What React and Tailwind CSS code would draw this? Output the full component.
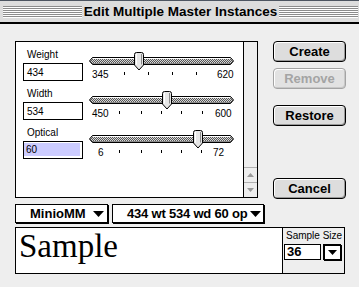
import React from "react";

const SYS = "font-['Liberation_Sans',Arial,sans-serif] font-bold text-[13px]";
const SMALL = "font-['Liberation_Sans',Arial,sans-serif] text-[10px]";

function Stripes() {
  return (
    <div className="flex-1 flex flex-col">
      {[0, 1, 2, 3, 4, 5].map((i) => (
        <div key={i} className="flex flex-col">
          <div className="h-px bg-[#8c8c8c]" />
          <div className="h-px bg-white" />
        </div>
      ))}
    </div>
  );
}

function Track({ id, cx }) {
  return (
    <svg width="145" height="19" className="block">
      <defs>
        <pattern id={id} width="2" height="2" patternUnits="userSpaceOnUse">
          <rect width="2" height="2" fill="#d8d8d8" />
          <rect width="1" height="1" fill="#555" />
          <rect x="1" y="1" width="1" height="1" fill="#555" />
        </pattern>
      </defs>
      <path
        d="M0.5 9 L3.5 5.5 L141.5 5.5 L144.5 9 L141.5 12.5 L3.5 12.5 Z"
        fill={`url(#${id})`}
        stroke="#000"
      />
      <path d="M4 6.5 H141" stroke="#fff" />
      <path d="M4 11.5 H141" stroke="#888" />
      <path
        d={`M${cx - 4.5} 2.5 Q${cx - 4.5} 0.5 ${cx - 2.5} 0.5 H${cx + 2.5} Q${cx + 4.5} 0.5 ${cx + 4.5} 2.5 V13 L${cx} 18 L${cx - 4.5} 13 Z`}
        fill="#e6e6e6"
        stroke="#000"
      />
      <path d={`M${cx - 2.5} 2 V12.5`} stroke="#fff" />
      <path d={`M${cx + 2.5} 2 V12.5`} stroke="#8a8a8a" />
    </svg>
  );
}

function Ticks({ width, ticks }) {
  return (
    <svg width={width} height="10" className="block shrink-0">
      {ticks.map((t) => (
        <rect key={t} x={t} y="2" width="1" height="3" fill="#000" />
      ))}
    </svg>
  );
}

function SliderRow({ id, label, value, min, max, cx, ticks, tickW, minCls, highlight }) {
  return (
    <div className="flex h-[39px]">
      <div className="w-[60px] flex flex-col">
        <div className={`${SMALL} h-[12px] leading-[12px] pl-[4px] text-black`}>{label}</div>
        {highlight ? (
          <div className="mt-[2px] h-[18px] border border-black bg-white pt-[1px] pb-[2px] pr-[2px]">
            <div className={`${SMALL} h-full bg-[#ccccff] pl-[2px] flex items-center text-black`}>{value}</div>
          </div>
        ) : (
          <div className={`${SMALL} mt-[2px] h-[18px] border border-black bg-white pl-[3px] flex items-center text-black`}>
            {value}
          </div>
        )}
      </div>
      <div className="ml-[6px] flex flex-col">
        <div className="mt-[3px]">
          <Track id={id} cx={cx} />
        </div>
        <div className={`${SMALL} flex h-[10px] leading-[10px] mt-[-1px] text-black`}>
          <div className={minCls}>{min}</div>
          <Ticks width={tickW} ticks={ticks} />
          <div>{max}</div>
        </div>
      </div>
    </div>
  );
}

function Btn({ children, disabled, cls }) {
  return (
    <div
      className={`${cls} h-[21px] w-[73px] rounded-[4px] border flex items-center justify-center ${SYS} ${
        disabled
          ? "border-[#a4a4a4] text-[#a4a4a4] bg-[#e2e2e2] shadow-[inset_1px_1px_0_#fff,inset_-1px_-1px_0_#c8c8c8]"
          : "border-black text-black bg-[#dddddd] shadow-[inset_1px_1px_0_#fff,inset_-1px_-1px_0_#999]"
      }`}
    >
      {children}
    </div>
  );
}

function DownTri({ w = 11, h = 6, fill = "#000" }) {
  return (
    <svg width={w} height={h} className="block shrink-0">
      <path d={`M0 0 H${w} L${w / 2} ${h} Z`} fill={fill} />
    </svg>
  );
}

export default function App() {
  return (
    <div className="w-[359px] h-[287px] bg-[#eeeeee] overflow-hidden flex flex-col">
      <div className="h-[24px] shrink-0 border-t border-t-[#4d5561] border-b-2 border-b-black bg-[#dddddd] flex items-center pl-[3px] pr-[1px]">
        <Stripes />
        <div className={`px-[2px] font-['Liberation_Sans',Arial,sans-serif] font-bold text-[13.5px] leading-[16px] text-black whitespace-nowrap`}>
          Edit Multiple Master Instances
        </div>
        <Stripes />
      </div>

      <div className="pl-[15px] pt-[17px] flex flex-col">
        <div className="flex">
          <div className="w-[243px] h-[157px] border border-black flex">
            <div className="flex-1 bg-white pl-[7px] pt-[7px] flex flex-col">
              <SliderRow
                id="p1"
                label="Weight"
                value="434"
                min="345"
                max="620"
                cx={50}
                ticks={[14, 38, 62, 86]}
                tickW={107}
                minCls="ml-[3px] w-[18px]"
              />
              <SliderRow
                id="p2"
                label="Width"
                value="534"
                min="450"
                max="600"
                cx={78}
                ticks={[9, 31, 51, 71, 92]}
                tickW={105}
                minCls="ml-[3px] w-[18px]"
              />
              <SliderRow
                id="p3"
                label="Optical"
                value="60"
                min="6"
                max="72"
                cx={109}
                ticks={[9, 31, 51, 71, 91]}
                tickW={103}
                minCls="ml-[9px] w-[12px]"
                highlight
              />
            </div>
            <div className="w-[14px] border-l border-black bg-[#eeeeee] flex flex-col">
              <div className="flex-1" />
              <div className="h-[15px] border-t border-[#b0b0b0] flex items-center justify-center">
                <svg width="7" height="4" className="block">
                  <path d="M0 4 H7 L3.5 0 Z" fill="#9a9a9a" />
                </svg>
              </div>
              <div className="h-[15px] border-t border-[#b0b0b0] flex items-center justify-center">
                <DownTri w={7} h={4} fill="#9a9a9a" />
              </div>
            </div>
          </div>

          <div className="ml-[15px] flex flex-col">
            <Btn cls="">Create</Btn>
            <Btn cls="mt-[6px]" disabled>
              Remove
            </Btn>
            <Btn cls="mt-[16px]">Restore</Btn>
            <Btn cls="mt-[52px]">Cancel</Btn>
          </div>
        </div>

        <div className="flex mt-[5px]">
          <div className={`w-[93px] h-[19px] border border-black bg-white shadow-[1px_1px_0_#000] flex items-center pl-[14px] pr-[3px] text-black ${SYS}`}>
            <span>MinioMM</span>
            <span className="ml-auto">
              <DownTri />
            </span>
          </div>
          <div className={`ml-[4px] w-[152px] h-[19px] border border-black bg-white shadow-[1px_1px_0_#000] flex items-center pl-[14px] pr-[2px] text-black whitespace-nowrap ${SYS}`}>
            <span className="tracking-[-0.2px]">434 wt 534 wd 60 op</span>
            <span className="ml-auto">
              <DownTri />
            </span>
          </div>
        </div>

        <div className="mt-[4px] w-[330px] h-[47px] border border-black flex">
          <div className="flex-1 bg-white pl-[3px] pt-[2px] font-['Liberation_Serif','Times_New_Roman',serif] text-[33px] leading-[33px] text-black">
            Sample
          </div>
          <div className="w-[62px] border-l border-black bg-[#eeeeee] flex flex-col">
            <div className={`${SMALL} pl-[3px] pt-[2px] leading-[12px] text-black whitespace-nowrap`}>Sample Size</div>
            <div className="flex mt-[2px] ml-[1px]">
              <div className={`w-[37px] h-[16px] border border-black bg-white pl-[2px] flex items-center text-black ${SYS}`}>36</div>
              <div className="ml-[2px] w-[18px] h-[16px] border border-black bg-white shadow-[1px_1px_0_#000,inset_1px_1px_0_#000] flex items-center justify-center">
                <DownTri w={9} h={5} />
              </div>
            </div>
          </div>
        </div>
      </div>
    </div>
  );
}
